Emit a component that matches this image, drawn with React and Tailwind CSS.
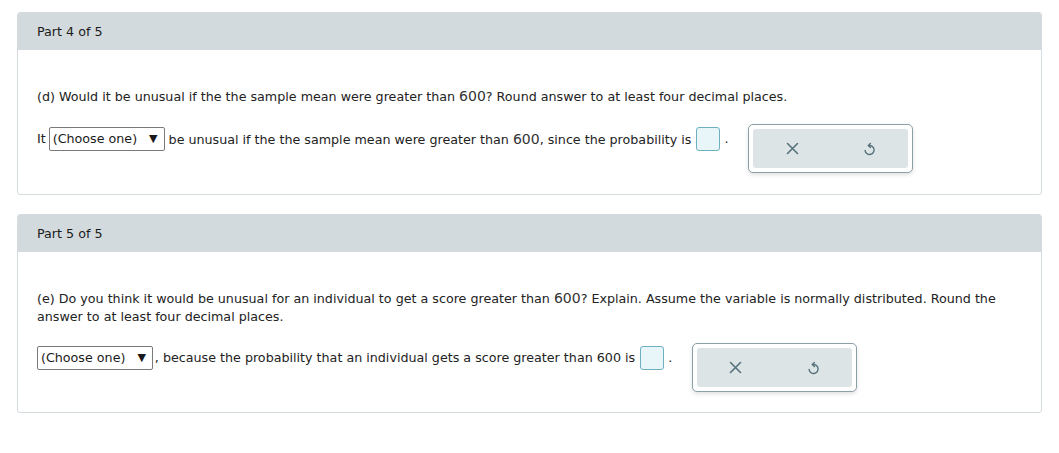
import React from 'react';

const XIcon = () => (
  <svg width="13" height="13" viewBox="0 0 13 13" fill="none">
    <path d="M1.5 1.5 L11.5 11.5 M11.5 1.5 L1.5 11.5" stroke="#56737d" strokeWidth="1.6" strokeLinecap="round" />
  </svg>
);

const UndoIcon = () => (
  <svg width="13" height="14" viewBox="0 0 13 14" fill="none">
    <path d="M5.8 3.6 A4.5 4.5 0 1 1 2.1 8.4" stroke="#56737d" strokeWidth="1.4" strokeLinecap="round" />
    <path d="M7.4 1.6 L5.3 3.6 L7.4 5.6" stroke="#56737d" strokeWidth="1.4" strokeLinecap="round" strokeLinejoin="round" />
  </svg>
);

const Select = () => (
  <span className="inline-flex items-center h-[24px] pl-[3px] pr-[6px] border border-[#7a7a7a] rounded-[2px] bg-white text-[#1a1a1a]">
    <span>(Choose one)</span>
    <span className="ml-[12px] text-[11px]">▼</span>
  </span>
);

const AnswerInput = () => (
  <span className="inline-block w-[24px] h-[24px] border border-[#6eb0c2] rounded-[3px] bg-[#e8f5f9] align-middle" />
);

const ActionBox = () => (
  <div className="w-[165px] h-[49px] p-[4px] border border-[#8a9fa6] rounded-[5px] bg-white shadow-[0_2px_4px_rgba(0,0,0,0.12)] shrink-0">
    <div className="w-full h-full bg-[#dde4e6] rounded-[3px] flex items-center">
      <div className="flex-1 flex justify-center"><XIcon /></div>
      <div className="flex-1 flex justify-center"><UndoIcon /></div>
    </div>
  </div>
);

const Card = ({ title, children }) => (
  <div className="border border-[#d5dcdf] rounded-[3px] bg-white overflow-hidden">
    <div className="h-[37px] bg-[#d3dadd] flex items-center pl-[19px] text-[#1a1a1a]">{title}</div>
    {children}
  </div>
);

const Num = ({ children }) => (
  <span className="text-[14px] text-[#333]">{children}</span>
);

export default function App() {
  return (
    <div
      className="w-[1059px] h-[453px] bg-white px-[17px] pt-[12px] text-[12.7px] text-[#222] leading-[18px]"
      style={{ fontFamily: '"DejaVu Sans", Verdana, sans-serif' }}
    >
      <Card title="Part 4 of 5">
        <div className="pl-[19px] pr-[40px] pt-[37px] pb-[21px]">
          <p>
            (d) Would it be unusual if the the sample mean were greater than <Num>600</Num>? Round answer to at least four decimal places.
          </p>
          <div className="flex items-start mt-[18px]">
            <div className="h-[30px] flex items-center whitespace-nowrap">
              <span className="mr-[3px]">It</span>
              <Select />
              <span className="ml-[4px]">be unusual if the the sample mean were greater than <Num>600</Num>, since the probability is</span>
              <span className="ml-[5px]"><AnswerInput /></span>
              <span className="ml-[4px]">.</span>
            </div>
            <div className="ml-[20px]">
              <ActionBox />
            </div>
          </div>
        </div>
      </Card>

      <div className="h-[19px]" />

      <Card title="Part 5 of 5">
        <div className="pl-[19px] pr-[40px] pt-[37px] pb-[20px]">
          <p>
            (e) Do you think it would be unusual for an individual to get a score greater than <Num>600</Num>? Explain. Assume the variable is normally distributed. Round the answer to at least four decimal places.
          </p>
          <div className="flex items-start mt-[17px]">
            <div className="h-[30px] flex items-center whitespace-nowrap">
              <Select />
              <span className="ml-[2px]">, because the probability that an individual gets a score greater than 600 is</span>
              <span className="ml-[5px]"><AnswerInput /></span>
              <span className="ml-[4px]">.</span>
            </div>
            <div className="ml-[20px]">
              <ActionBox />
            </div>
          </div>
        </div>
      </Card>
    </div>
  );
}
